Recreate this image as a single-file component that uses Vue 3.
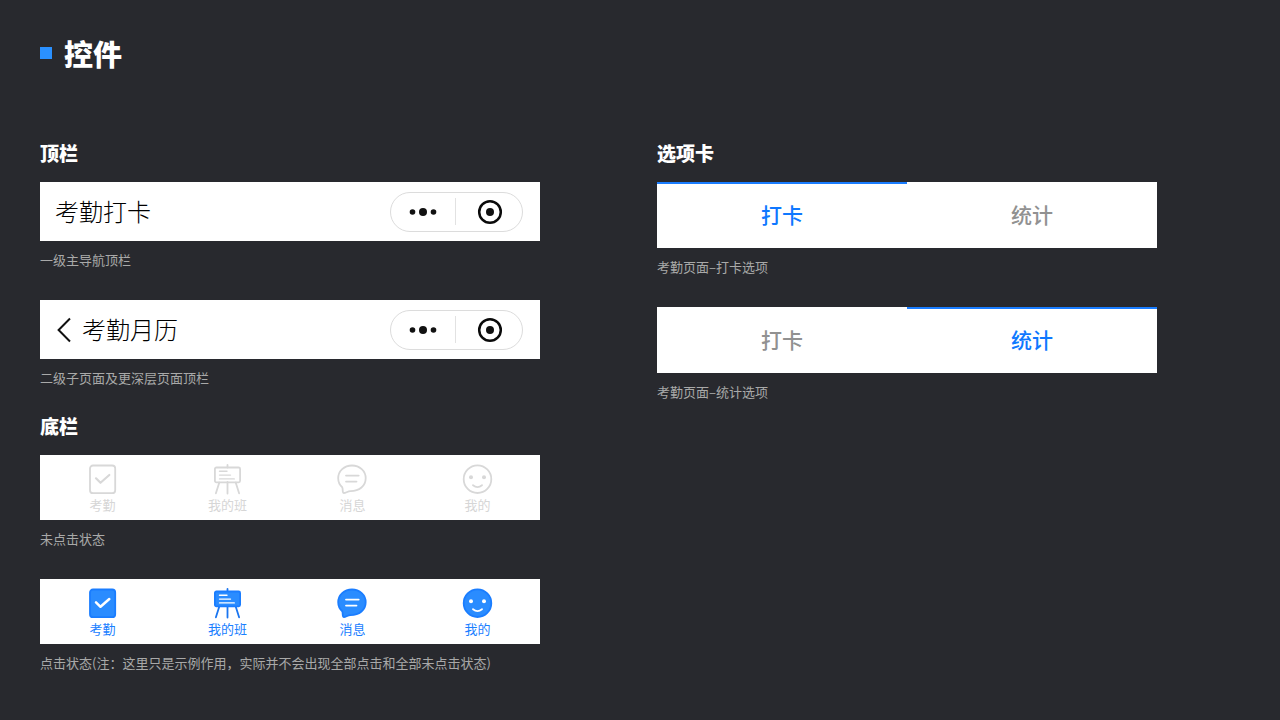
<script setup>
const navBars = [
  { title: '考勤打卡', back: false, caption: '一级主导航顶栏' },
  { title: '考勤月历', back: true, caption: '二级子页面及更深层页面顶栏' },
]

const tabItems = [
  { icon: 'check', label: '考勤' },
  { icon: 'board', label: '我的班' },
  { icon: 'chat', label: '消息' },
  { icon: 'face', label: '我的' },
]

const bottomBars = [
  { active: false, caption: '未点击状态' },
  { active: true, caption: '点击状态(注：这里只是示例作用，实际并不会出现全部点击和全部未点击状态)' },
]

const options = ['打卡', '统计']
const optionBars = [
  { selected: 0, caption: '考勤页面–打卡选项' },
  { selected: 1, caption: '考勤页面–统计选项' },
]
</script>

<template>
  <main class="page">
    <h1 class="page-title">控件</h1>

    <div class="columns">
      <div class="column">
        <section class="section">
          <h2 class="section-title">顶栏</h2>
          <figure v-for="bar in navBars" :key="bar.title" class="sample">
            <header class="nav">
              <button v-if="bar.back" class="back" type="button" aria-label="返回">
                <svg width="16" height="28" viewBox="0 0 16 28">
                  <path d="M15 2.5 3.6 14 15 25.5" />
                </svg>
              </button>
              <span class="nav-title">{{ bar.title }}</span>
              <div class="capsule">
                <button class="capsule-button" type="button" aria-label="更多">
                  <svg width="28" height="26" viewBox="0 0 28 26">
                    <circle cx="3.5" cy="13" r="2.8" />
                    <circle cx="14" cy="13" r="4" />
                    <circle cx="24.5" cy="13" r="2.8" />
                  </svg>
                </button>
                <span class="divider"></span>
                <button class="capsule-button target" type="button" aria-label="关闭">
                  <svg width="26" height="26" viewBox="0 0 26 26">
                    <circle class="ring" cx="13" cy="13" r="10.8" />
                    <circle cx="13" cy="13" r="4" />
                  </svg>
                </button>
              </div>
            </header>
            <figcaption class="caption">{{ bar.caption }}</figcaption>
          </figure>
        </section>

        <section class="section">
          <h2 class="section-title">底栏</h2>
          <figure v-for="bar in bottomBars" :key="bar.caption" class="sample">
            <nav class="tabbar" :class="{ active: bar.active }">
              <button v-for="item in tabItems" :key="item.label" class="tabbar-item" type="button">
                <svg class="icon" width="31" height="32" viewBox="0 0 31 32" aria-hidden="true">
                  <template v-if="item.icon === 'check'">
                    <rect class="shape" x="3" y="2.5" width="25.2" height="27.7" rx="3" />
                    <path class="mark thick" d="M9 15.3 13.5 19.8 22.3 12" />
                  </template>
                  <template v-else-if="item.icon === 'board'">
                    <path class="leg" d="M15.5 2V4.5M15.5 19V30.5M7.3 19.5 3.9 30.3M23.7 19.5 27.1 30.3" />
                    <rect class="shape" x="2.9" y="4.5" width="25.2" height="14.8" rx="1.5" />
                    <path class="mark thin" d="M7.5 8.2H15M7.5 12.1H18.5M7.5 15.9H22.3" />
                  </template>
                  <template v-else-if="item.icon === 'chat'">
                    <path class="shape" d="M15 2.5C7.2 2.5 1.2 7.9 1.2 15.3C1.2 19 2.7 22 5.2 24.2C6.2 25.5 5 29.5 6.7 30C8.5 30.3 10.6 28.2 13.5 28.1C22.5 28.1 28.7 22.8 28.7 15.3C28.7 7.9 22.7 2.5 15 2.5Z" />
                    <path class="mark" d="M9 12.6H21.7M9 18.6H19.5" />
                  </template>
                  <template v-else>
                    <circle class="shape" cx="15.5" cy="16.2" r="13.8" />
                    <circle class="eye" cx="9" cy="14.3" r="2" />
                    <circle class="eye" cx="22" cy="14.3" r="2" />
                    <path class="mark" d="M11 22.2Q15.5 26 20 22.2" />
                  </template>
                </svg>
                <span>{{ item.label }}</span>
              </button>
            </nav>
            <figcaption class="caption">{{ bar.caption }}</figcaption>
          </figure>
        </section>
      </div>

      <div class="column">
        <section class="section">
          <h2 class="section-title">选项卡</h2>
          <figure v-for="bar in optionBars" :key="bar.caption" class="sample">
            <div class="options" role="tablist">
              <button
                v-for="(name, i) in options"
                :key="name"
                class="option"
                :class="{ selected: bar.selected === i }"
                type="button"
                role="tab"
                :aria-selected="bar.selected === i"
              >{{ name }}</button>
            </div>
            <figcaption class="caption">{{ bar.caption }}</figcaption>
          </figure>
        </section>
      </div>
    </div>
  </main>
</template>

<style>
body {
  background: #28292e;
}
</style>

<style scoped>
.page {
  box-sizing: border-box;
  min-height: 100vh;
  padding: 35px 123px 35px 40px;
  background: #28292e;
  color: #fff;
  font-family: "Noto Sans CJK SC", sans-serif;
}

.page-title {
  display: flex;
  align-items: center;
  gap: 12px;
  margin: 0 0 70px;
  font-size: 29px;
  line-height: 36px;
  font-weight: 900;
}

.page-title::before {
  content: "";
  width: 12px;
  height: 12px;
  background: #2a90ff;
}

.columns {
  display: grid;
  grid-template-columns: 1fr 1fr;
  gap: 117px;
}

.section + .section {
  margin-top: 26px;
}

.section-title {
  margin: 0 0 17px;
  font-size: 19px;
  line-height: 24px;
  font-weight: 900;
}

.sample {
  margin: 0;
}

.sample + .sample {
  margin-top: 30px;
}

.caption {
  margin-top: 9px;
  color: #a9a9a9;
  font-size: 13px;
  line-height: 20px;
  white-space: nowrap;
}

button {
  margin: 0;
  padding: 0;
  border: 0;
  background: none;
  color: inherit;
  font: inherit;
}

svg {
  display: block;
}

.nav {
  box-sizing: border-box;
  display: flex;
  align-items: center;
  height: 59px;
  padding: 0 17px 0 15px;
  background: #fff;
  color: #000;
}

.back {
  margin-right: 11px;
}

.back path {
  fill: none;
  stroke: #111;
  stroke-width: 2;
}

.nav-title {
  padding-bottom: 2px;
  font-size: 24px;
  line-height: 36px;
  font-weight: 300;
}

.capsule {
  box-sizing: border-box;
  display: flex;
  align-items: center;
  width: 133px;
  height: 40px;
  margin-left: auto;
  border: 1px solid #dcdcdc;
  border-radius: 20px;
}

.capsule-button {
  display: flex;
  flex: 1;
  justify-content: center;
  fill: #111;
}

.target {
  padding-left: 3px;
}

.divider {
  width: 1px;
  height: 27px;
  background: #e2e2e2;
}

.ring {
  fill: none;
  stroke: #0a0a0a;
  stroke-width: 2.5;
}

.tabbar {
  box-sizing: border-box;
  display: grid;
  grid-template-columns: repeat(4, 1fr);
  height: 65px;
  padding-top: 8px;
  background: #fff;
  color: #d6d6d6;
}

.tabbar-item {
  display: flex;
  flex-direction: column;
  align-items: center;
  font-size: 13px;
  line-height: 20px;
}

.shape {
  fill: none;
  stroke: #d8d8d8;
  stroke-width: 1.8;
}

.mark,
.leg {
  fill: none;
  stroke: #d8d8d8;
  stroke-width: 1.8;
  stroke-linecap: round;
  stroke-linejoin: round;
}

.thin {
  stroke-width: 1.4;
}

.thick {
  stroke-width: 2.2;
}

.eye {
  fill: #d8d8d8;
}

.active {
  color: #1a80ff;
}

.active .shape {
  fill: #2a8cff;
  stroke: #1a7dff;
}

.active .leg {
  stroke: #1a75f0;
}

.active .mark {
  stroke: #fff;
}

.active .thick {
  stroke-width: 2.5;
}

.active .eye {
  fill: #fff;
}

.options {
  display: grid;
  grid-template-columns: 1fr 1fr;
  height: 66px;
  background: #fff;
}

.option {
  padding-bottom: 4px;
  border-top: 2px solid transparent;
  color: #919191;
  font-size: 21px;
  line-height: 30px;
  font-weight: 500;
}

.selected {
  border-top-color: #1a7dff;
  color: #0f78ff;
}
</style>
